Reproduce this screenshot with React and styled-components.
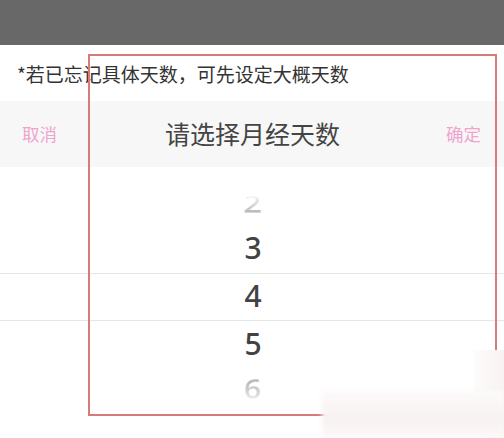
import React from "react";
import styled, { createGlobalStyle } from "styled-components";

const Global = createGlobalStyle`
  html, body { margin: 0; padding: 0; background: #ffffff; }
  body { font-family: "Noto Sans CJK SC", "Noto Sans", sans-serif; }
  * { box-sizing: border-box; }
`;

const Screen = styled.div`
  position: relative;
  width: 504px;
  height: 438px;
  overflow: hidden;
  background: #ffffff;
  display: flex;
  flex-direction: column;
`;

const TopShade = styled.div`
  height: 45px;
  flex: none;
  background: #686868;
`;

const Note = styled.div`
  height: 56px;
  flex: none;
  display: flex;
  align-items: center;
  padding-left: 17px;
  font-size: 19px;
  color: #333333;
`;

const Toolbar = styled.div`
  height: 66px;
  flex: none;
  background: #f7f7f7;
  display: flex;
  align-items: center;
  justify-content: space-between;
  padding: 0 23px 2px 22px;
`;

const Action = styled.span`
  font-size: 17.5px;
  color: #eea4cd;
  width: 40px;
  text-align: ${(p) => (p.$right ? "right" : "left")};
`;

const Title = styled.span`
  font-size: 25px;
  color: #444444;
  padding-left: 2px;
`;

const Picker = styled.div`
  flex: 1;
  display: flex;
  flex-direction: column;
  padding-top: 10px;
`;

const Row = styled.div`
  height: 48px;
  flex: none;
  display: flex;
  align-items: center;
  justify-content: center;
  padding-bottom: 3px;
  font-family: "Noto Sans", "Roboto", sans-serif;
  font-weight: 500;
  font-size: 30px;
  color: ${(p) => (p.$faded ? "#b5b5b5" : "#424242")};
  border-top: ${(p) => (p.$lineTop ? "1px solid #e6e6e6" : "0")};
  border-bottom: ${(p) => (p.$lineBottom ? "1px solid #e6e6e6" : "0")};
`;

const tiltTransform = {
  up: "perspective(110px) rotateX(45deg) translateY(5px)",
  down: "perspective(120px) rotateX(-32deg) translateY(-3px)",
};

const tiltMask = {
  up: "linear-gradient(to bottom, rgba(0,0,0,0.1) 25%, #000 80%)",
  down: "linear-gradient(to bottom, #000 30%, rgba(0,0,0,0.2) 85%)",
};

const Digit = styled.span`
  display: inline-block;
  padding-left: 2px;
  transform: ${(p) => tiltTransform[p.$tilt] || "none"};
  -webkit-mask-image: ${(p) => tiltMask[p.$tilt] || "none"};
  mask-image: ${(p) => tiltMask[p.$tilt] || "none"};
`;

const Annotation = styled.div`
  position: absolute;
  left: 88px;
  top: 54px;
  width: 409px;
  height: 362px;
  border: 2px solid #d87a7a;
  pointer-events: none;
`;

const Watermark = styled.div`
  position: absolute;
  right: 0;
  bottom: 0;
  width: 182px;
  height: 47px;
  background: linear-gradient(to bottom, #fcfafa, #f8f2f1 60%, #fbf9f9);
  filter: blur(2px);
  pointer-events: none;
`;

const WatermarkSide = styled.div`
  position: absolute;
  right: 0;
  top: 350px;
  width: 31px;
  height: 88px;
  background: linear-gradient(to right, #fdfbfb, #f8f3f2);
  pointer-events: none;
`;

const rows = [
  { n: 2, faded: true, tilt: "up" },
  { n: 3 },
  { n: 4, lineTop: true, lineBottom: true },
  { n: 5 },
  { n: 6, faded: true, tilt: "down" },
];

export default function App() {
  return (
    <>
      <Global />
      <Screen>
        <TopShade />
        <Note>*若已忘记具体天数，可先设定大概天数</Note>
        <Toolbar>
          <Action>取消</Action>
          <Title>请选择月经天数</Title>
          <Action $right>确定</Action>
        </Toolbar>
        <Picker>
          {rows.map((r) => (
            <Row
              key={r.n}
              $faded={r.faded}
              $lineTop={r.lineTop}
              $lineBottom={r.lineBottom}
            >
              <Digit $tilt={r.tilt}>{r.n}</Digit>
            </Row>
          ))}
        </Picker>
        <Annotation />
        <WatermarkSide />
        <Watermark />
      </Screen>
    </>
  );
}
